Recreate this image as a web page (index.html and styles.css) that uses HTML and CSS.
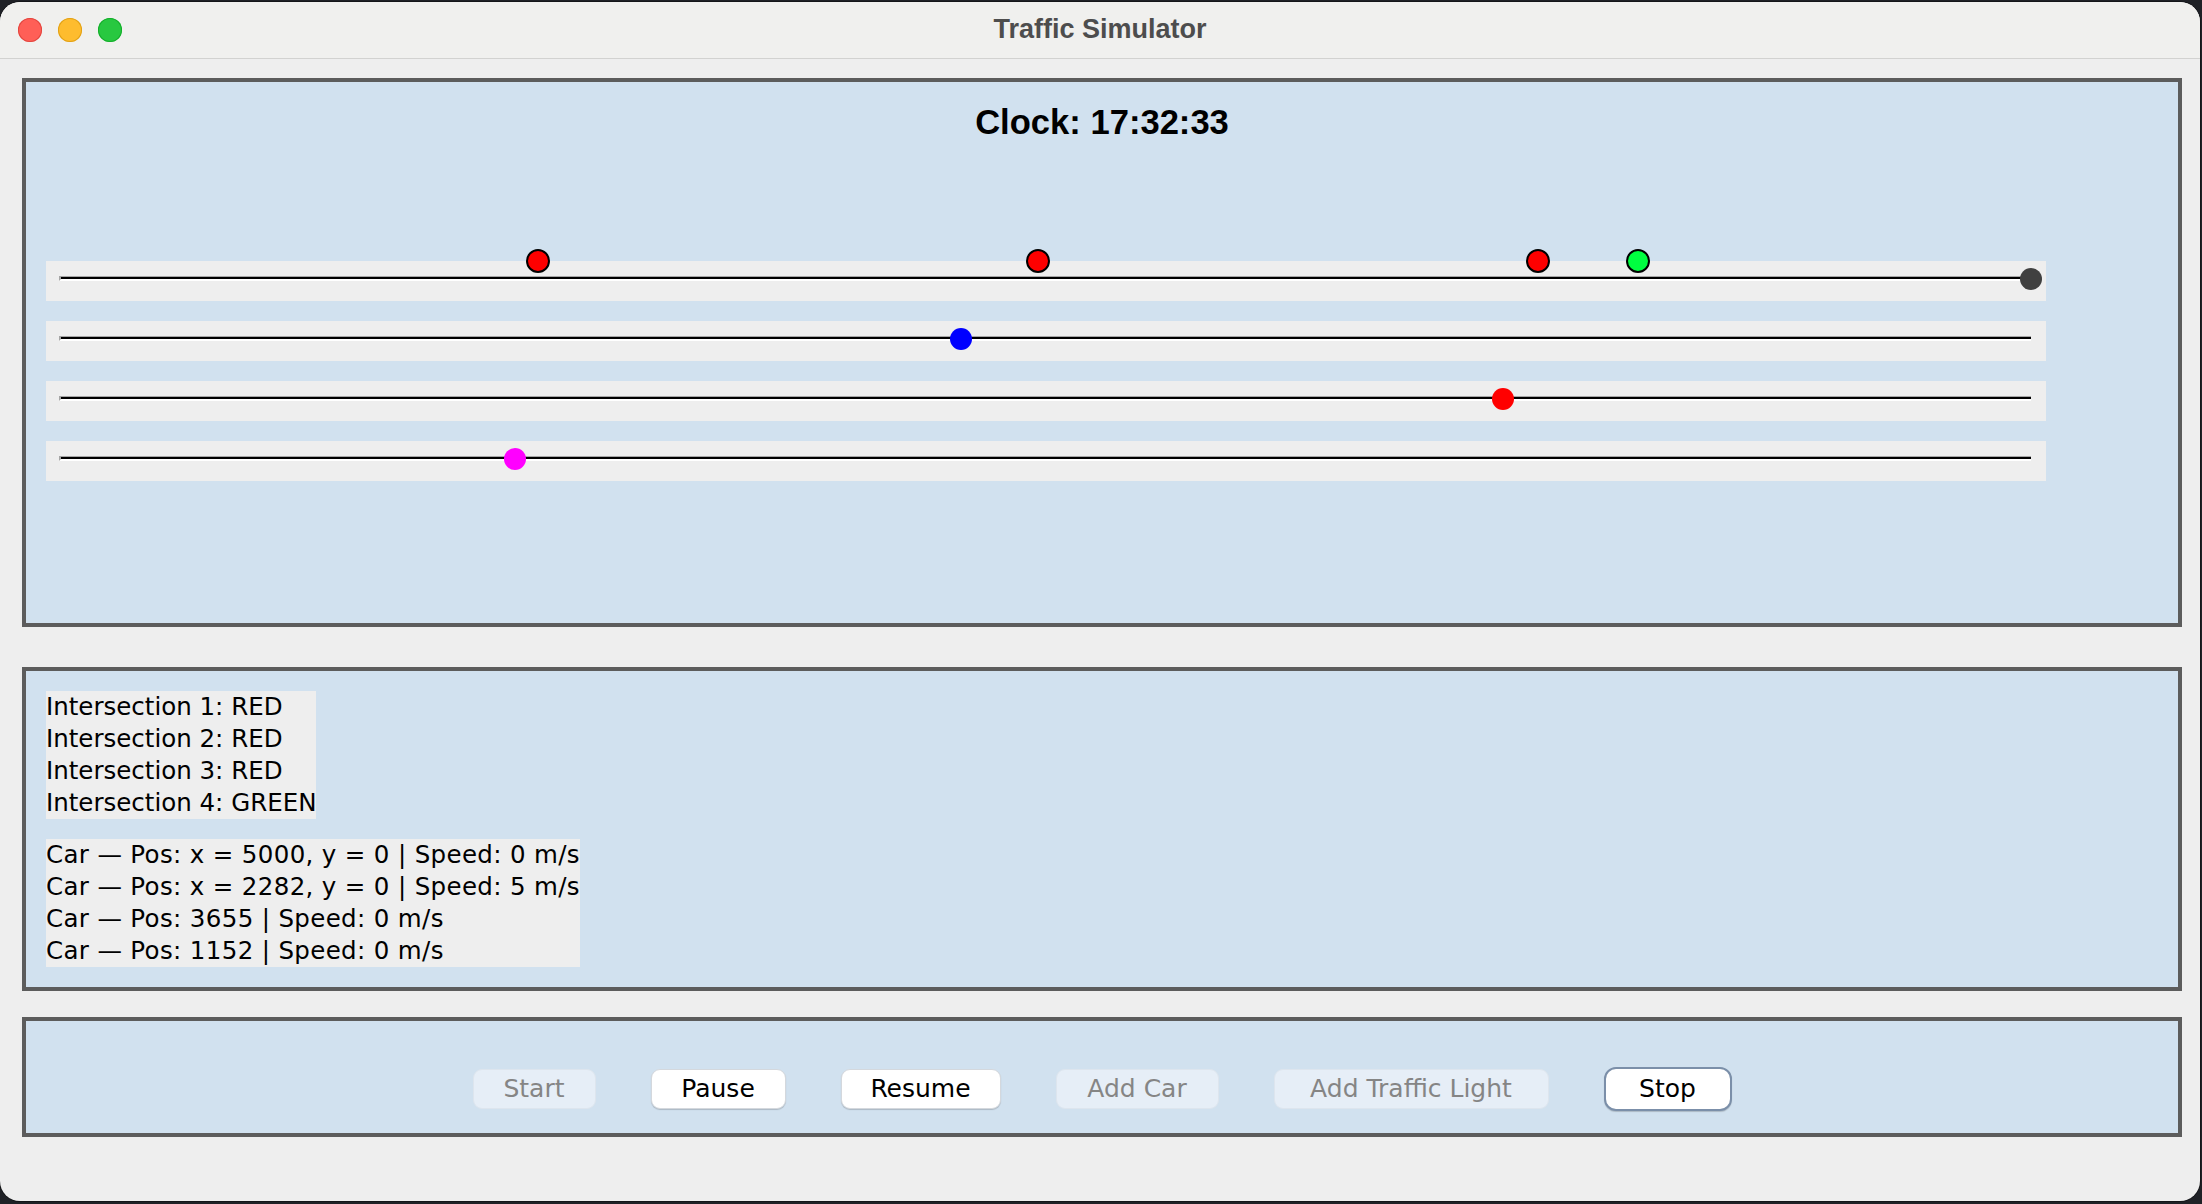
FILE: index.html
```html
<!DOCTYPE html>
<html>
<head>
<meta charset="utf-8">
<title>Traffic Simulator</title>
<link rel="stylesheet" href="styles.css">
</head>
<body>
<div class="window">
  <div class="titlebar">
    <div class="lights">
      <span class="tl tl-close"></span>
      <span class="tl tl-min"></span>
      <span class="tl tl-max"></span>
    </div>
    <div class="title">Traffic Simulator</div>
    <div></div>
  </div>
  <div class="content">
    <section class="panel sim">
      <div class="clock">Clock: 17:32:33</div>
      <div class="lanes">
        <div class="lane">
          <div class="road"></div>
          <span class="light red" style="left:480px"></span>
          <span class="light red" style="left:980px"></span>
          <span class="light red" style="left:1480px"></span>
          <span class="light green" style="left:1580px"></span>
          <span class="car end" style="left:1974px"></span>
        </div>
        <div class="lane">
          <div class="road"></div>
          <span class="car blue" style="left:904px"></span>
        </div>
        <div class="lane">
          <div class="road"></div>
          <span class="car red" style="left:1446px"></span>
        </div>
        <div class="lane">
          <div class="road"></div>
          <span class="car magenta" style="left:458px"></span>
        </div>
      </div>
    </section>
    <section class="panel info">
      <div class="block">
        <div>Intersection 1: RED</div>
        <div>Intersection 2: RED</div>
        <div>Intersection 3: RED</div>
        <div>Intersection 4: GREEN</div>
      </div>
      <div class="block cars">
        <div>Car — Pos: x = 5000, y = 0 | Speed: 0 m/s</div>
        <div>Car — Pos: x = 2282, y = 0 | Speed: 5 m/s</div>
        <div>Car — Pos: 3655 | Speed: 0 m/s</div>
        <div>Car — Pos: 1152 | Speed: 0 m/s</div>
      </div>
    </section>
    <section class="panel controls">
      <button class="btn btn-start" disabled>Start</button>
      <button class="btn btn-pause">Pause</button>
      <button class="btn btn-resume">Resume</button>
      <button class="btn btn-addcar" disabled>Add Car</button>
      <button class="btn btn-addlight" disabled>Add Traffic Light</button>
      <button class="btn btn-stop focus">Stop</button>
    </section>
  </div>
</div>
</body>
</html>
```

FILE: styles.css
```css
* { box-sizing: border-box; }
html, body { margin: 0; padding: 0; }
body {
  background: #1f2126;
  width: 2202px;
  height: 1204px;
  overflow: hidden;
}
.window {
  margin-top: 2px;
  width: 2200px;
  height: 1199px;
  background: #eeeeee;
  border-radius: 20px;
  overflow: hidden;
  box-shadow: 0 0 0 1px rgba(0,0,0,0.35);
}
.titlebar {
  height: 57px;
  background: #f0f0ee;
  border-bottom: 1px solid #d2d2d0;
  display: grid;
  grid-template-columns: 1fr auto 1fr;
  align-items: center;
}
.lights {
  display: flex;
  gap: 16px;
  padding-left: 18px;
}
.tl {
  width: 24px;
  height: 24px;
  border-radius: 50%;
  display: block;
}
.tl-close { background: #ff5f57; box-shadow: inset 0 0 0 1px #e2463f; }
.tl-min { background: #febc2e; box-shadow: inset 0 0 0 1px #e1a116; }
.tl-max { background: #28c840; box-shadow: inset 0 0 0 1px #14ae2a; }
.title {
  font-family: "Liberation Sans", Arial, sans-serif;
  font-weight: bold;
  font-size: 27px;
  color: #4d4d4d;
  margin-top: -2px;
}
.content {
  padding: 19px 18px 0 22px;
  display: flex;
  flex-direction: column;
}
.panel {
  border: 4px solid #5c5c5c;
  background: #d1e1ef;
}
.sim {
  height: 549px;
  padding: 20px 0 0 20px;
}
.clock {
  font-family: "Liberation Sans", Arial, sans-serif;
  font-weight: bold;
  font-size: 34.6px;
  line-height: 40px;
  text-align: center;
  color: #000;
  padding-right: 20px;
}
.lanes {
  margin-top: 119px;
  display: flex;
  flex-direction: column;
  gap: 20px;
}
.lane {
  position: relative;
  width: 2000px;
  height: 40px;
  background: #eeeeee;
}
.road {
  position: absolute;
  left: 13px;
  top: 15px;
  width: 1972px;
  height: 5px;
  border-top: 1px solid #a6a6a6;
  border-bottom: 2px solid #ffffff;
  background: #000;
  border-left: 2px solid #a6a6a6;
}
.light {
  position: absolute;
  top: -12px;
  width: 24px;
  height: 24px;
  border-radius: 50%;
  border: 2px solid #000;
}
.light.red { background: #ff0000; }
.light.green { background: #00ff40; }
.car {
  position: absolute;
  top: 7px;
  width: 22px;
  height: 22px;
  border-radius: 50%;
}
.car.end { background: #404040; }
.car.blue { background: #0000ff; }
.car.red { background: #ff0000; }
.car.magenta { background: #ff00ff; }
.info {
  margin-top: 40px;
  height: 324px;
  padding: 20px;
  display: flex;
  flex-direction: column;
  align-items: flex-start;
  gap: 20px;
}
.block {
  background: #eeeeee;
  font-family: "DejaVu Sans", sans-serif;
  font-size: 24.5px;
  line-height: 32px;
  color: #000;
  white-space: nowrap;
}
.cars {
  letter-spacing: 0.35px;
}
.controls {
  margin-top: 26px;
  height: 120px;
  padding-top: 48px;
  display: flex;
  justify-content: center;
  align-items: flex-start;
  gap: 55px;
}
.btn {
  font-family: "DejaVu Sans", sans-serif;
  font-size: 25px;
  height: 40px;
  padding: 0;
  text-align: center;
  border-radius: 9px;
  background: #ffffff;
  color: #000;
  border: 1px solid #d4d8dd;
  box-shadow: 0 1px 1px rgba(0,0,0,0.18);
  line-height: 36px;
  margin: 0;
}
.btn-start { width: 123px; }
.btn-pause { width: 135px; }
.btn-resume { width: 160px; }
.btn-addcar { width: 163px; }
.btn-addlight { width: 275px; }
.btn-stop { width: 128px; }
.btn:disabled {
  background: #e6eef7;
  color: #858585;
  border-color: #dde5ee;
  box-shadow: none;
}
.btn.focus {
  border: 2px solid #7b8fa9;
  height: 44px;
  margin-top: -2px;
  border-radius: 12px;
  line-height: 38px;
}
```
